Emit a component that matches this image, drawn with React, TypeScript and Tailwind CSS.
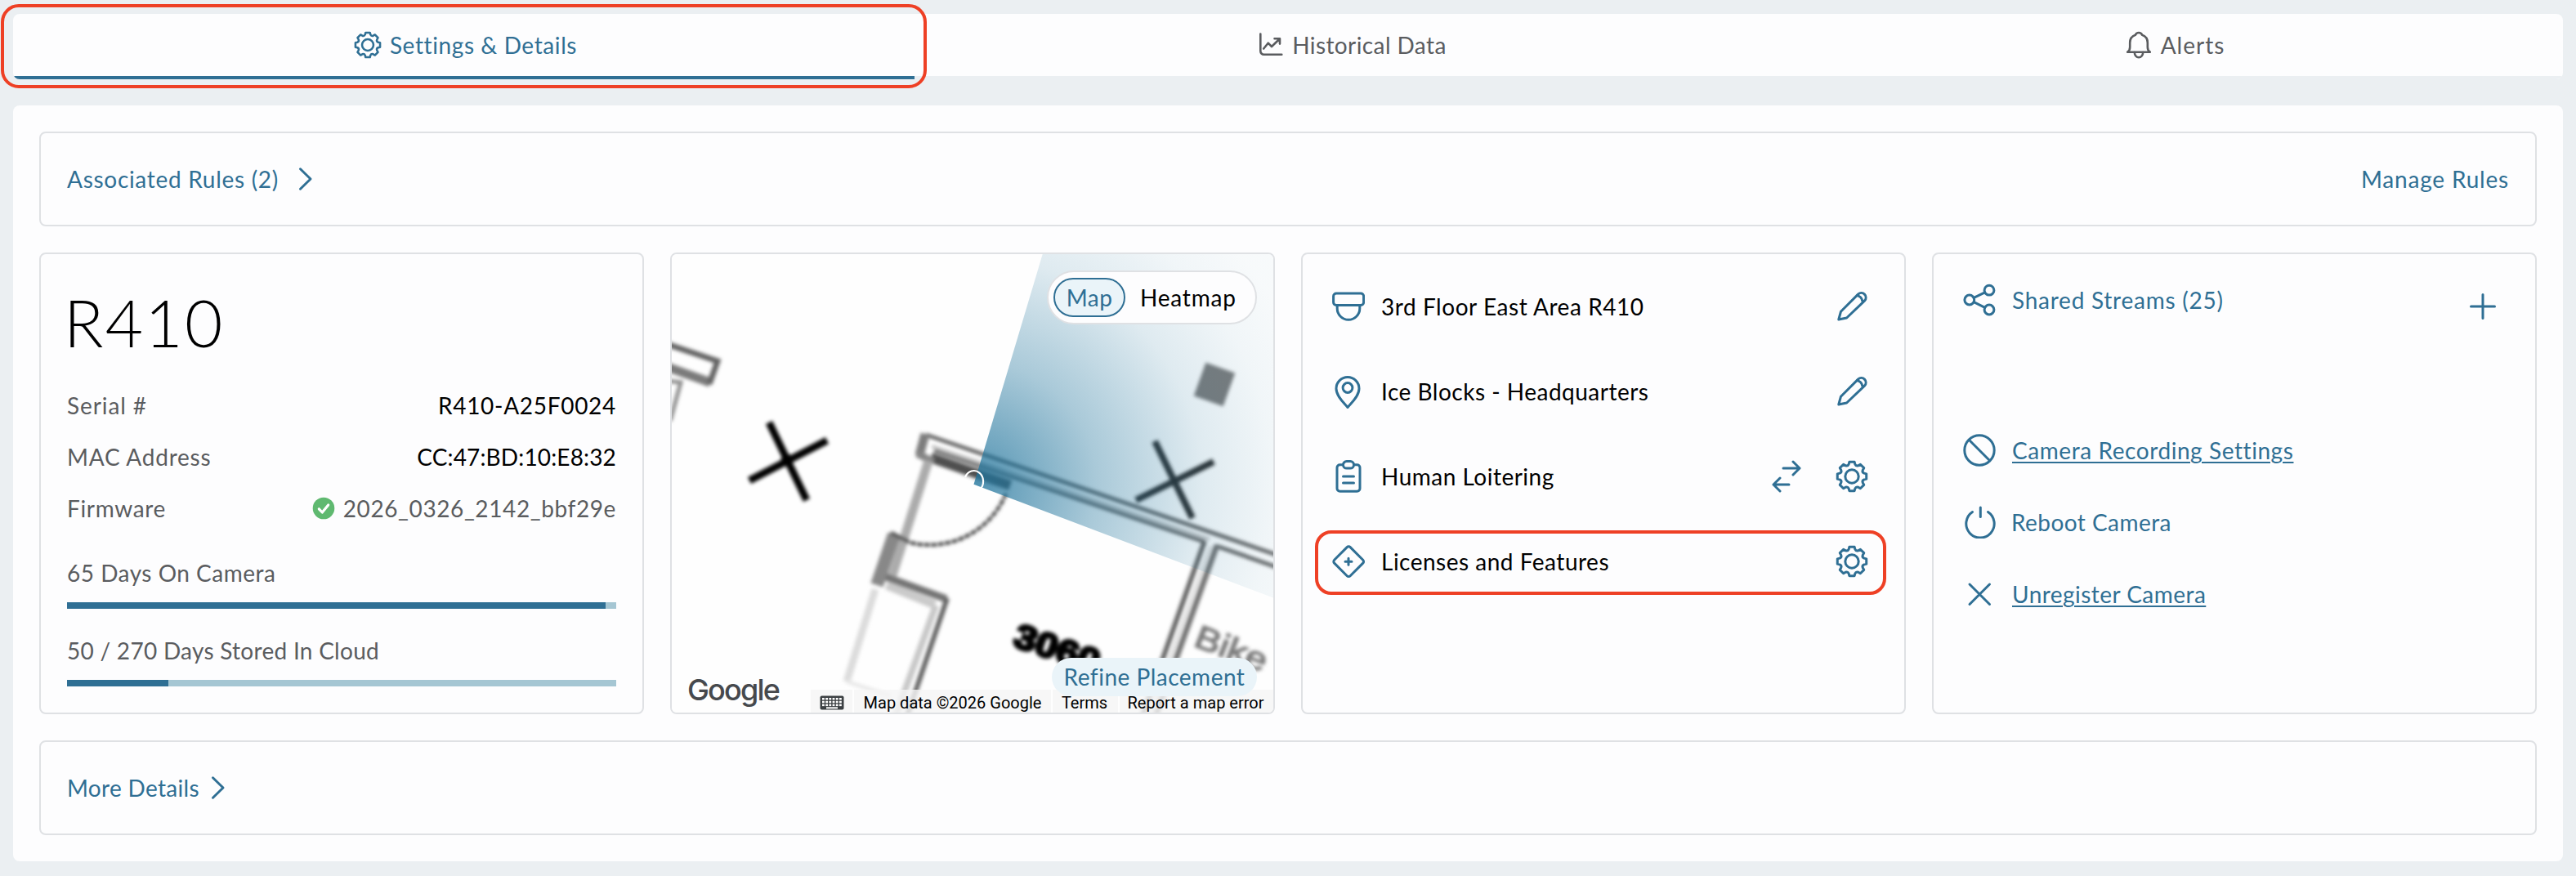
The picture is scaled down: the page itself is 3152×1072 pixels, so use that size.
import React from 'react';

interface IconProps {
  className?: string;
}

interface DeviceRow {
  label: string;
  tracking: string;
  icon: React.ReactNode;
  actions: React.ReactNode;
  highlighted?: boolean;
}

const iconStroke = {
  fill: 'none',
  stroke: 'currentColor',
  strokeWidth: 3,
  strokeLinecap: 'round',
  strokeLinejoin: 'round',
} as const;

function gearPath() {
  const point = (angle: number, radius: number) => {
    const rad = ((angle - 90) * Math.PI) / 180;
    return `${(20 + radius * Math.cos(rad)).toFixed(2)} ${(20 + radius * Math.sin(rad)).toFixed(2)}`;
  };
  let d = `M${point(-10, 18)}`;
  for (let tooth = 0; tooth < 8; tooth++) {
    const a = tooth * 45;
    d += `L${point(a + 10, 18)}L${point(a + 14.5, 15.4)}Q${point(a + 22.5, 13.2)} ${point(a + 30.5, 15.4)}L${point(a + 35, 18)}`;
  }
  return `${d}Z`;
}

const GEAR = gearPath();

function GearIcon({ className = 'size-10' }: IconProps) {
  return (
    <svg viewBox="0 0 40 40" className={className} {...iconStroke}>
      <path d={GEAR} />
      <circle cx="20" cy="20" r="8.2" />
    </svg>
  );
}

function PencilIcon() {
  return (
    <svg viewBox="0 0 40 40" className="size-10" {...iconStroke}>
      <path d="M3.8 36 6.5 26.2 27.8 4.9a5.6 5.6 0 0 1 7.9 7.9L13.6 34Z" />
      <path d="M26.4 6.6c3.2.6 5.6 3 6.4 6.6" />
    </svg>
  );
}

function SwapIcon() {
  return (
    <svg viewBox="0 0 40 40" className="size-10" {...iconStroke}>
      <path d="M16 10h20M28 2l8 8-8 8M23 30H4M12 22l-8 8 8 8" />
    </svg>
  );
}

function DomeIcon() {
  return (
    <svg viewBox="0 0 40 40" className="size-10" {...iconStroke}>
      <rect x="1.6" y="4" width="37" height="14.5" rx="3.5" />
      <path d="M6.2 18.5v4a13.8 13.8 0 0 0 27.6 0v-4" />
    </svg>
  );
}

function PinIcon() {
  return (
    <svg viewBox="0 0 40 40" className="size-10 overflow-visible" {...iconStroke}>
      <path d="M19 39.500C15 34.500 5 26 5 16.500a14 14 0 0 1 28 0C33 26 23 34.500 19 39.500Z" />
      <circle cx="19" cy="15.500" r="5.900" />
    </svg>
  );
}

function ClipboardIcon() {
  return (
    <svg viewBox="0 0 40 40" className="size-10" {...iconStroke}>
      <path d="M13.500 5.700H9.500a3.500 3.500 0 0 0-3.500 3.500v25.500a3.500 3.500 0 0 0 3.500 3.500h21a3.500 3.500 0 0 0 3.500-3.500V9.200a3.500 3.500 0 0 0-3.500-3.500h-4" />
      <rect x="13.500" y="1.600" width="13" height="8.500" rx="4.200" />
      <path d="M13.500 20h13M13.500 28h13" />
    </svg>
  );
}

function LicenseIcon() {
  return (
    <svg viewBox="0 0 40 40" className="size-10 overflow-visible" {...iconStroke}>
      <rect x="6.400" y="6.400" width="27.600" height="27.600" rx="2.800" transform="rotate(45 20.200 20.200)" />
      <path d="M20 16.200v8M16 20.200h8" />
    </svg>
  );
}

function ShareIcon() {
  return (
    <svg viewBox="0 0 40 40" className="size-10" {...iconStroke}>
      <circle cx="7.800" cy="20" r="5.900" />
      <circle cx="32" cy="8.200" r="5.900" />
      <circle cx="32" cy="32" r="5.900" />
      <path d="M13.200 17.400 26.700 10.800M13.200 22.600l13.500 6.700" />
    </svg>
  );
}

function BanIcon() {
  return (
    <svg viewBox="0 0 40 40" className="size-10" {...iconStroke}>
      <circle cx="20" cy="20" r="18.200" />
      <path d="M7.300 7.300l25.400 25.400" />
    </svg>
  );
}

function PowerIcon() {
  return (
    <svg viewBox="0 0 40 40" className="size-10" {...iconStroke}>
      <path d="M11.500 7.500a17.200 17.200 0 1 0 19 0" />
      <path d="M21.300 2v11.500" />
    </svg>
  );
}

function CloseIcon() {
  return (
    <svg viewBox="0 0 40 40" className="size-10" {...iconStroke}>
      <path d="M8 8l24.500 24.500M32.500 8 8 32.500" />
    </svg>
  );
}

function PlusIcon() {
  return (
    <svg viewBox="0 0 40 40" className="size-10" {...iconStroke}>
      <path d="M20 5.500v29M5.500 20h29" />
    </svg>
  );
}

function ChevronIcon() {
  return (
    <svg viewBox="0 0 18 30" className="h-[30px] w-[18px]" {...iconStroke}>
      <path d="M2.500 2.800 15 15 2.500 27.200" />
    </svg>
  );
}

function ChartIcon() {
  return (
    <svg viewBox="0 0 34 34" className="size-[34px]" {...iconStroke} strokeWidth={2.6}>
      <path d="M3.300 3.500v21a4.200 4.200 0 0 0 4.200 4.200H29.300" />
      <path d="M7.200 21.500l5.500-6.800 4.300 4.300L26.800 9.500M20.500 9.300H27v6.300" />
    </svg>
  );
}

function BellIcon() {
  return (
    <svg viewBox="0 0 34 34" className="size-[34px]" {...iconStroke} strokeWidth={2.6}>
      <path d="M3.200 25.700h27.600c-2.300-1.500-3-3.200-3-6v-5.500c0-4.500-2.600-7.900-6.700-9.400C20.400 2.800 18.800 2 17 2s-3.400.8-4.100 2.800c-4.100 1.500-6.700 4.900-6.700 9.400v5.500c0 2.800-.7 4.500-3 6Z" />
      <path d="M11.800 26a5.200 6.300 0 0 0 10.400 0" />
    </svg>
  );
}

function CheckBadge() {
  return (
    <svg viewBox="0 0 28 28" className="size-7">
      <circle cx="14" cy="14" r="13.300" fill="#5fb970" />
      <path d="M8.300 14.800l4 4.200 7.400-9" fill="none" stroke="#fff" strokeWidth="3.200" strokeLinecap="round" strokeLinejoin="round" />
    </svg>
  );
}

function KeyboardIcon() {
  return (
    <svg viewBox="0 0 30 18" className="h-[18px] w-[30px]">
      <rect x="0.500" y="0.500" width="29" height="17" rx="2" fill="#3c4043" />
      {[3, 6.800, 10.600].map((y) =>
        [3, 7.200, 11.400, 15.600, 19.800, 24].map((x) => (
          <rect key={`${x}-${y}`} x={x} y={y} width="2.800" height="2.500" fill="#fff" />
        ))
      )}
      <rect x="8" y="14.300" width="14" height="2" fill="#fff" />
    </svg>
  );
}

function FloorPlan() {
  return (
    <svg viewBox="822 311 736 561" className="block h-[561px] w-[736px]">
      <defs>
        <filter id="soft" x="-10%" y="-10%" width="120%" height="120%">
          <feGaussianBlur stdDeviation="2" />
        </filter>
        <radialGradient id="view" gradientUnits="userSpaceOnUse" cx="1191.5" cy="592.7" r="430">
          <stop offset="0" stopColor="#20749c" stopOpacity="0.8" />
          <stop offset="0.12" stopColor="#20749c" stopOpacity="0.64" />
          <stop offset="0.35" stopColor="#20749c" stopOpacity="0.38" />
          <stop offset="0.65" stopColor="#20749c" stopOpacity="0.14" />
          <stop offset="0.85" stopColor="#20749c" stopOpacity="0.06" />
          <stop offset="1" stopColor="#20749c" stopOpacity="0.03" />
        </radialGradient>
      </defs>
      <rect x="822" y="311" width="736" height="561" fill="#fefefe" />
      <g filter="url(#soft)" fill="none" stroke="#646464" strokeWidth="5">
        {/* corner column, top left */}
        <path d="M816 449 869 468" stroke="#7a7a7a" strokeWidth="11" />
        <path d="M816 421 878 442 868 470" strokeWidth="7" />
        <path d="M816 466 833 468 820 515" stroke="#8e8e8e" />

        {/* X markers */}
        <path d="M941 517 987 612M917 588 1012 539" stroke="#000" strokeWidth="9" />
        <circle cx="963" cy="563" r="7.500" fill="#000" stroke="none" />
        <path d="M1413 540 1459 634M1390 612 1485 565" stroke="#2b2b2b" strokeWidth="8" />
        <path d="M1476 445 1510 457 1496 496 1462 484Z" fill="#7c7c7c" stroke="#7c7c7c" strokeWidth="2" />

        {/* long wall with divider */}
        <path d="M1133 532 1562 679" />
        <path d="M1143 551 1474 663M1488 668 1562 694" />
        <path d="M1140 546 1480 660" stroke="#c4c4c4" strokeWidth="4" />
        <path d="M1139 560 1236 594" stroke="#505050" strokeWidth="12" />
        <path d="M1132 531 1125 557" stroke="#7d7d7d" strokeWidth="11" />
        <path d="M1122 555 1142 565" stroke="#858585" strokeWidth="9" />
        <path d="M1474 662 1398 876" strokeWidth="6" />
        <path d="M1489 667 1414 876" strokeWidth="7" stroke="#747474" />
        <path d="M1481 668 1406 876" strokeWidth="3" stroke="#d4d4d4" />

        {/* door */}
        <path d="M1136 564 1092 704" stroke="#acacac" strokeWidth="11" />
        <path d="M1094 654 1073 716" stroke="#888" strokeWidth="16" />
        <path d="M1090 652 1112 663" stroke="#5c5c5c" />
        <path d="M1231 604A101 101 0 0 1 1110 663" stroke="#4a4a4a" strokeWidth="4.500" strokeDasharray="7 1.500" />
        <path d="M1085 716 1144 740" stroke="#cacaca" strokeWidth="11" />
        <path d="M1084 706 1158 733" stroke="#757575" strokeWidth="9" />
        <path d="M1159 732 1110 876" strokeWidth="6" />
        <path d="M1145 741 1096 876" stroke="#c8c8c8" strokeWidth="8" />
        <path d="M1071 721 1036 834" stroke="#dcdcdc" strokeWidth="9" />
        <path d="M1036 834 1090 852" stroke="#e8e8e8" />
      </g>
      <g filter="url(#soft)" fontFamily="Liberation Sans, sans-serif">
        <text x="1238" y="790" transform="rotate(19 1238 790)" fontSize="42" fontWeight="700" textLength="108" lengthAdjust="spacingAndGlyphs" stroke="#000" strokeWidth="3.500">
          3060
        </text>
        <text x="1459" y="790" transform="rotate(21 1459 790)" fontSize="40" fill="#7a7a7a" stroke="#7a7a7a" strokeWidth="1.500" textLength="92" lengthAdjust="spacingAndGlyphs">
          Bike
        </text>
      </g>
      <path d="M1191.500 592.700 1276.300 309 1560 309 1560 732.300Z" fill="url(#view)" />
      <path d="M1181 584A11.500 13 0 1 1 1199 599" fill="none" stroke="#fff" strokeWidth="2.200" />
    </svg>
  );
}

function MapCard() {
  return (
    <div className="relative h-[565px] overflow-hidden rounded-lg border-2 border-[#dfe1e4]">
      <FloorPlan />
      <div className="absolute top-5 right-5 flex h-[66px] w-[257px] items-center rounded-full border-2 border-[#dfe1e4] bg-[#fdfdfe] pl-1.5">
        <div className="flex h-12 w-[88px] items-center justify-center rounded-full border-2 border-[#2f6f94] bg-[#eaf4f9] tracking-[0.5px] text-[#2f6f94]">Map</div>
        <div className="ml-[18px] tracking-[0.8px] text-black">Heatmap</div>
      </div>
      <div className="absolute bottom-[6px] left-[19px] font-[Inter] text-[36px] leading-[44px] font-medium tracking-[-1.8px] text-[#46494d]">Google</div>
      <div className="absolute right-0 bottom-0 flex h-7 gap-0.5 font-[Roboto] text-[20px] leading-[33px] text-black">
        <div className="flex w-[51px] items-center justify-center bg-[#f5f5f5]/80 pt-1"><KeyboardIcon /></div>
        <div className="w-[241px] bg-[#f5f5f5]/80 text-center whitespace-nowrap">Map data ©2026 Google</div>
        <div className="w-20 bg-[#f5f5f5]/80 pr-0.5 text-center">Terms</div>
        <div className="w-[188px] bg-[#f5f5f5]/80 pr-0.5 text-center whitespace-nowrap">Report a map error</div>
      </div>
      <div className="absolute right-5 bottom-5 flex h-[47px] w-[251px] items-center justify-center rounded-full bg-[#eaf4f9] pb-0.5 tracking-[0.5px] text-[#2f6f94]">
        Refine Placement
      </div>
    </div>
  );
}

function UsageBar({ percent }: { percent: number }) {
  return (
    <div className="mt-4 h-2 bg-[#a5c6d3]">
      <div className="h-full bg-[#2f6f94]" style={{ width: `${percent}%` }} />
    </div>
  );
}

function InfoCard() {
  return (
    <div className="h-[565px] rounded-lg border-2 border-[#dfe1e4] px-8 pt-[35px] text-[#5a5c5f]">
      <h1 className="-ml-1 h-24 text-[80px] leading-[96px] font-light tracking-[2.2px] text-black">R410</h1>
      <div className="mt-[22px]">
        <div className="flex h-[63px] items-center justify-between">
          <span className="tracking-[0.9px]">Serial #</span>
          <span className="tracking-[0.7px] text-black">R410-A25F0024</span>
        </div>
        <div className="flex h-[63px] items-center justify-between">
          <span className="tracking-[0.75px]">MAC Address</span>
          <span className="tracking-[0.15px] text-black">CC:47:BD:10:E8:32</span>
        </div>
        <div className="flex h-[63px] items-center justify-between">
          <span className="tracking-[0.65px]">Firmware</span>
          <span className="flex items-center gap-2.5 tracking-[0.6px]">
            <CheckBadge />
            2026_0326_2142_bbf29e
          </span>
        </div>
      </div>
      <div className="mt-7 leading-10 tracking-[0.5px]">65 Days On Camera</div>
      <UsageBar percent={98.1} />
      <div className="mt-[31px] leading-10 tracking-[0.28px]">50 / 270 Days Stored In Cloud</div>
      <UsageBar percent={18.4} />
    </div>
  );
}

const deviceRows: DeviceRow[] = [
  { label: '3rd Floor East Area R410', tracking: 'tracking-[0.55px]', icon: <DomeIcon />, actions: <PencilIcon /> },
  { label: 'Ice Blocks - Headquarters', tracking: 'tracking-[0.5px]', icon: <PinIcon />, actions: <PencilIcon /> },
  {
    label: 'Human Loitering',
    tracking: 'tracking-[0.5px]',
    icon: <ClipboardIcon />,
    actions: (
      <>
        <SwapIcon />
        <GearIcon />
      </>
    ),
  },
  { label: 'Licenses and Features', tracking: 'tracking-[0.5px]', icon: <LicenseIcon />, actions: <GearIcon />, highlighted: true },
];

function DeviceCard() {
  return (
    <div className="h-[565px] rounded-lg border-2 border-[#dfe1e4] pt-3">
      {deviceRows.map((row) => (
        <div key={row.label} className="relative flex h-[104px] items-center pr-11 pl-9 text-[#2f6f94]">
          {row.icon}
          <span className={`ml-5 text-black ${row.tracking}`}>{row.label}</span>
          <div className="ml-auto flex gap-10">{row.actions}</div>
          {row.highlighted && (
            <div className="absolute top-3.5 left-[15px] h-[79px] w-[699px] rounded-[20px] border-4 border-[#ee4025]" />
          )}
        </div>
      ))}
    </div>
  );
}

function StreamsCard() {
  return (
    <div className="h-[565px] rounded-lg border-2 border-[#dfe1e4] pt-4 pl-9 text-[#2f6f94]">
      <div className="flex h-20 items-center">
        <ShareIcon />
        <span className="ml-5 tracking-[0.75px]">Shared Streams (25)</span>
        <div className="mt-4 mr-[44px] ml-auto"><PlusIcon /></div>
      </div>
      <div className="mt-[100px]">
        <div className="flex h-[88px] items-center">
          <BanIcon />
          <a className="ml-5 tracking-[0.57px] underline decoration-2 underline-offset-3">Camera Recording Settings</a>
        </div>
        <div className="flex h-[88px] items-center">
          <PowerIcon />
          <span className="ml-[19px] tracking-[0.45px]">Reboot Camera</span>
        </div>
        <div className="flex h-[88px] items-center">
          <CloseIcon />
          <a className="ml-5 tracking-[0.46px] underline decoration-2 underline-offset-3">Unregister Camera</a>
        </div>
      </div>
    </div>
  );
}

function Tabs() {
  return (
    <div className="relative">
      <div className="flex h-20 overflow-hidden rounded-lg text-[#5a5c5f]">
        <div className="flex w-[1103px] items-center justify-center gap-2.5 border-b-4 border-[#2f6f94] bg-[#fdfdfe] pl-1 text-[#2f6f94]">
          <GearIcon className="size-[34px]" />
          <span className="tracking-[0.6px]">Settings &amp; Details</span>
        </div>
        <div className="flex w-[1071px] items-center justify-center gap-2 border-b-4 border-[#ebeff2] bg-[#fdfdfe]">
          <ChartIcon />
          <span className="tracking-[0.4px]">Historical Data</span>
        </div>
        <div className="flex flex-1 items-center justify-center gap-2.5 border-b-4 border-[#ebeff2] bg-[#fdfdfe] pr-1">
          <BellIcon />
          <span className="tracking-[1px]">Alerts</span>
        </div>
      </div>
      <div className="absolute -top-3 -left-[15px] h-[103px] w-[1133px] rounded-[22px] border-4 border-[#ee4025]" />
    </div>
  );
}

export default function App() {
  return (
    <div className="h-[1072px] w-[3152px] overflow-hidden bg-[#ebeff2] px-4 pt-[17px] font-[Lato] text-[28px] leading-10">
      <Tabs />
      <div className="mt-8 flex h-[925px] flex-col gap-8 rounded-lg bg-[#fdfdfe] p-8">
        <div className="flex h-[116px] items-center rounded-lg border-2 border-[#dfe1e4] px-8 text-[#2f6f94]">
          <span className="tracking-[0.7px]">Associated Rules (2)</span>
          <div className="ml-[24px]"><ChevronIcon /></div>
          <span className="ml-auto tracking-[0.8px]">Manage Rules</span>
        </div>
        <div className="grid grid-cols-4 gap-8">
          <InfoCard />
          <MapCard />
          <DeviceCard />
          <StreamsCard />
        </div>
        <div className="flex h-[116px] items-center rounded-lg border-2 border-[#dfe1e4] px-8 text-[#2f6f94]">
          <span className="tracking-[0.3px]">More Details</span>
          <div className="ml-[14px]"><ChevronIcon /></div>
        </div>
      </div>
    </div>
  );
}
